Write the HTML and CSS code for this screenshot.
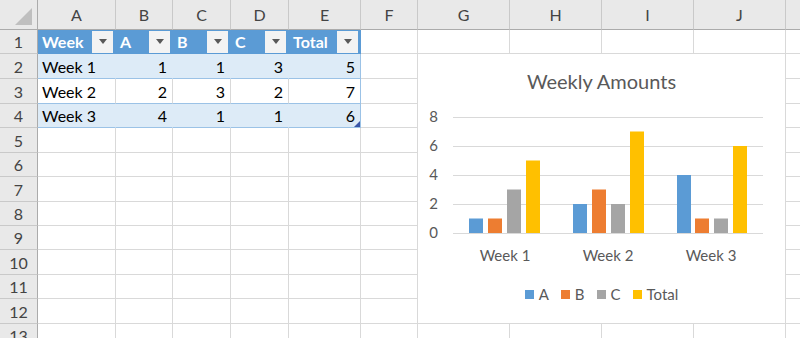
FILE: index.html
```html
<!DOCTYPE html>
<html lang="en">
<head>
    <meta charset="UTF-8">
    <title>Weekly Amounts</title>
    <link rel="stylesheet" href="styles.css">
</head>
<body>
    <div class="sheet" id="sheet">
        <!-- Chart object floating over G2:J12 -->
        <div class="chart">
            <div class="chart-title">Weekly Amounts</div>
            <svg class="plot" width="367" height="180" viewBox="0 0 367 180">
                <g class="grid">
                    <line x1="35" x2="345" y1="24.5" y2="24.5"/>
                    <line x1="35" x2="345" y1="53.5" y2="53.5"/>
                    <line x1="35" x2="345" y1="82.5" y2="82.5"/>
                    <line x1="35" x2="345" y1="111.5" y2="111.5"/>
                    <line x1="35" x2="345" y1="140.5" y2="140.5"/>
                </g>
                <g class="axis">
                    <text x="20" y="29">8</text>
                    <text x="20" y="58">6</text>
                    <text x="20" y="87">4</text>
                    <text x="20" y="116">2</text>
                    <text x="20" y="145">0</text>
                </g>
                <!-- Week 1 -->
                <rect class="s-a" x="51" y="125.5" width="14" height="14.5"/>
                <rect class="s-b" x="70" y="125.5" width="14" height="14.5"/>
                <rect class="s-c" x="89" y="96.5" width="14" height="43.5"/>
                <rect class="s-t" x="108" y="67.5" width="14" height="72.5"/>
                <!-- Week 2 -->
                <rect class="s-a" x="155" y="111" width="14" height="29"/>
                <rect class="s-b" x="174" y="96.5" width="14" height="43.5"/>
                <rect class="s-c" x="193" y="111" width="14" height="29"/>
                <rect class="s-t" x="212" y="38.5" width="14" height="101.5"/>
                <!-- Week 3 -->
                <rect class="s-a" x="259" y="82" width="14" height="58"/>
                <rect class="s-b" x="277" y="125.5" width="14" height="14.5"/>
                <rect class="s-c" x="296" y="125.5" width="14" height="14.5"/>
                <rect class="s-t" x="315" y="53" width="14" height="87"/>
                <g class="cats">
                    <text x="87" y="168">Week 1</text>
                    <text x="190" y="168">Week 2</text>
                    <text x="293" y="168">Week 3</text>
                </g>
            </svg>
            <div class="legend">
                <span class="key"><i class="sw s-a"></i>A</span>
                <span class="key"><i class="sw s-b"></i>B</span>
                <span class="key"><i class="sw s-c"></i>C</span>
                <span class="key"><i class="sw s-t"></i>Total</span>
            </div>
        </div>
    </div>

    <script>
        // last column only shows its left edge, so no letter
        const letters = ['A', 'B', 'C', 'D', 'E', 'F', 'G', 'H', 'I', 'J', ''];
        const data = [
            ['Week', 'A', 'B', 'C', 'Total'],
            ['Week 1', 1, 1, 3, 5],
            ['Week 2', 2, 3, 2, 7],
            ['Week 3', 4, 1, 1, 6]
        ];
        const sheet = document.getElementById('sheet');
        const chart = sheet.querySelector('.chart');

        function addCell(cls, text) {
            const el = document.createElement('div');
            el.className = 'cell ' + cls;
            if (text !== undefined) el.textContent = text;
            sheet.insertBefore(el, chart);
            return el;
        }

        // column header row
        const corner = addCell('corner');
        corner.innerHTML = '<span class="select-all"></span>';
        letters.forEach(l => addCell('col-head', l));

        for (let r = 1; r <= 13; r++) {
            addCell('row-head', r);
            letters.forEach((l, c) => {
                const row = data[r - 1];
                if (!row || c > 4) {
                    addCell('');
                    return;
                }
                if (r === 1) {
                    const th = addCell('th');
                    th.innerHTML = '<span>' + row[c] + '</span><span class="filter"></span>';
                    return;
                }
                let cls = r % 2 === 0 ? 'band' : 'plain';
                if (c > 0) cls += ' num';
                if (c === 4) cls += ' last';
                const td = addCell(cls, row[c]);
                if (r === 4 && c === 4) td.classList.add('resize');
            });
        }
    </script>
</body>
</html>
```

FILE: styles.css
```css
body {
    margin: 0;
    background: #fff;
    font-family: Lato, "Liberation Sans", sans-serif;
    overflow: hidden;
}

.sheet {
    position: relative;
    width: 800px;
    height: 338px;
    overflow: hidden;
    display: grid;
    grid-template-columns: 38px 78px 57px 58px 58px 72px 57px 92px 92px 92px 92px 92px;
    grid-template-rows: 30px 24px 25px 25px 24px 25px 24px 25px 24px 24px 25px 24px 25px 24px;
}

.cell {
    box-sizing: border-box;
    border-right: 1px solid #d9d9d9;
    border-bottom: 1px solid #d9d9d9;
    display: flex;
    align-items: center;
    padding: 0 4px;
    font-size: 16px;
    color: #000;
    white-space: nowrap;
    min-width: 0;
}

.corner,
.col-head,
.row-head {
    background: #e9e9e9;
    color: #444;
    border-color: #c9c9c9;
}

.col-head {
    justify-content: center;
    border-bottom-color: #ababab;
}

.row-head {
    justify-content: center;
    border-right-color: #ababab;
}

.corner {
    justify-content: flex-end;
    align-items: flex-end;
    padding: 0 5px 4px 0;
    border-bottom-color: #ababab;
    border-right-color: #ababab;
}

.select-all {
    width: 17px;
    height: 17px;
    background: #bfbfbf;
    clip-path: polygon(100% 0, 100% 100%, 0 100%);
}

/* table header */
.th {
    background: #5b9bd5;
    border-color: #5b9bd5;
    color: #fff;
    font-weight: bold;
    padding-right: 2px;
}

.filter {
    margin-left: auto;
    width: 21px;
    height: 22px;
    background: #f3f3f3;
    display: flex;
    align-items: center;
    justify-content: center;
}

.filter::before {
    content: "";
    border-left: 4px solid transparent;
    border-right: 4px solid transparent;
    border-top: 5px solid #595959;
}

/* table body */
.band {
    background: #ddebf7;
    border-right-color: #ddebf7;
    border-bottom-color: #9bc2e6;
}

.plain {
    border-bottom-color: #9bc2e6;
}

.num {
    justify-content: flex-end;
    padding-right: 5px;
}

.last {
    border-right-color: #9bc2e6;
}

.resize {
    position: relative;
}

.resize::after {
    content: "";
    position: absolute;
    right: 0;
    bottom: 0;
    width: 6px;
    height: 6px;
    background: #3b56a8;
    clip-path: polygon(100% 0, 100% 100%, 0 100%);
}

/* chart */
.chart {
    position: absolute;
    grid-column: 8 / 12;
    grid-row: 3 / 14;
    top: -1px;
    left: -1px;
    right: 0;
    bottom: 0;
    z-index: 2;
    background: #fff;
    border: 1px solid #d9d9d9;
    display: flex;
    flex-direction: column;
    color: #595959;
}

.chart-title {
    text-align: center;
    font-size: 20px;
    line-height: 24px;
    padding-top: 15px;
}

.plot {
    display: block;
}

.grid line {
    stroke: #d9d9d9;
    stroke-width: 1;
}

.plot text {
    font-family: Lato, "Liberation Sans", sans-serif;
    font-size: 15px;
    fill: #595959;
}

.axis text {
    text-anchor: end;
}

.cats text {
    text-anchor: middle;
}

.s-a { fill: #5b9bd5; background: #5b9bd5; }
.s-b { fill: #ed7d31; background: #ed7d31; }
.s-c { fill: #a5a5a5; background: #a5a5a5; }
.s-t { fill: #ffc000; background: #ffc000; }

.legend {
    height: 42px;
    display: flex;
    justify-content: center;
    align-items: center;
    gap: 12px;
    font-size: 15px;
}

.key {
    display: flex;
    align-items: center;
    gap: 5px;
}

.sw {
    width: 9px;
    height: 9px;
}
```
